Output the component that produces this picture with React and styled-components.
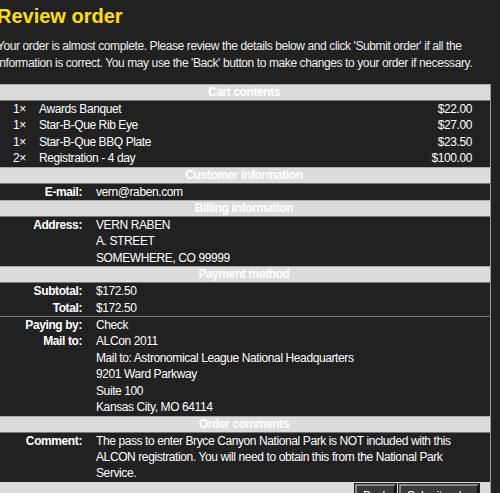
import React from "react";
import styled, { createGlobalStyle } from "styled-components";

const Global = createGlobalStyle`
  html, body { margin: 0; background: #212121; }
  body { font-family: "Liberation Sans", Arial, sans-serif; font-size: 12px; letter-spacing: -0.4px; color: #fff; overflow: hidden; }
`;

const Page = styled.div`
  margin-left: -3px;
  width: 494px;
  height: 493px;
`;
const Title = styled.h1`
  margin: 0;
  padding-top: 4px;
  color: #ffe000;
  font-size: 20px;
  letter-spacing: 0;
  line-height: 24px;
  font-weight: bold;
`;
const Intro = styled.p`
  margin: 10px 0 12px;
  font-size: 12px;
  line-height: 17px;
  color: #eee;
`;
const Table = styled.table`
  width: 494px;
  border-collapse: collapse;
  border-right: 1px solid #9a9a9a;
  border-left: 1px solid #9a9a9a;
`;
const Head = styled.th`
  background: #dcdcdc;
  color: #fff;
  font-weight: bold;
  text-align: center;
  height: 15px;
  line-height: 15px;
  padding: 0;
  border-top: 1px solid #aaa;
  border-bottom: 1px solid #777;
`;
const Cell = styled.td`
  padding: 0 ${(p) => p.$pr || 0}px 0 ${(p) => p.$pl || 0}px;
  line-height: 16.4px;
  vertical-align: top;
  text-align: ${(p) => p.$align || "left"};
  font-weight: ${(p) => (p.$bold ? "bold" : "normal")};
  border-top: ${(p) => (p.$sep ? "1px solid #777" : "none")};
`;
const Footer = styled.td`
  background: #dcdcdc;
  padding: 2px 11px 2px 0;
  text-align: right;
`;
const Button = styled.button`
  background: #3a3a3a;
  color: #fff;
  font-family: inherit;
  font-size: 12px;
  letter-spacing: -0.4px;
  height: 24px;
  padding: 0 6px;
  margin-left: 3px;
  border: 2px solid;
  border-color: #888 #111 #111 #888;
  outline: 1px solid #222;
`;

const cart = [
  ["1×", "Awards Banquet", "$22.00"],
  ["1×", "Star-B-Que Rib Eye", "$27.00"],
  ["1×", "Star-B-Que BBQ Plate", "$23.50"],
  ["2×", "Registration - 4 day", "$100.00"],
];

const Lines = ({ items }) => items.map((t, i) => <div key={i}>{t}</div>);

const Pair = ({ label, children, sep }) => (
  <tr>
    <Cell $bold $align="right" $pr={14} $sep={sep} style={{ width: 84 }}>{label}</Cell>
    <Cell colSpan={2} $pr={30} $sep={sep}>{children}</Cell>
  </tr>
);

export default function App() {
  return (
    <Page>
      <Global />
      <Title>Review order</Title>
      <Intro>
        Your order is almost complete. Please review the details below and click 'Submit order' if all the
        information is correct. You may use the 'Back' button to make changes to your order if necessary.
      </Intro>
      <Table>
        <tbody>
          <tr><Head colSpan={3}>Cart contents</Head></tr>
          {cart.map(([q, n, p], i) => (
            <tr key={i}>
              <Cell $pl={15} style={{ width: 26 }}>{q}</Cell>
              <Cell>{n}</Cell>
              <Cell $align="right" $pr={18}>{p}</Cell>
            </tr>
          ))}
        </tbody>
      </Table>
      <Table>
        <tbody>
          <tr><Head colSpan={3}>Customer information</Head></tr>
          <Pair label="E-mail:">vern@raben.com</Pair>
          <tr><Head colSpan={3}>Billing information</Head></tr>
          <Pair label="Address:"><Lines items={["VERN RABEN", "A. STREET", "SOMEWHERE, CO 99999"]} /></Pair>
          <tr><Head colSpan={3}>Payment method</Head></tr>
          <Pair label="Subtotal:">$172.50</Pair>
          <Pair label="Total:">$172.50</Pair>
          <Pair label="Paying by:" sep>Check</Pair>
          <Pair label="Mail to:">
            <Lines items={["ALCon 2011", "Mail to: Astronomical League National Headquarters", "9201 Ward Parkway", "Suite 100", "Kansas City, MO 64114"]} />
          </Pair>
          <tr><Head colSpan={3}>Order comments</Head></tr>
          <Pair label="Comment:">
            The pass to enter Bryce Canyon National Park is NOT included with this ALCON registration. You will need to obtain this from the National Park Service.
          </Pair>
          <tr>
            <Footer colSpan={3}>
              <Button>Back</Button>
              <Button>Submit order</Button>
            </Footer>
          </tr>
        </tbody>
      </Table>
    </Page>
  );
}
